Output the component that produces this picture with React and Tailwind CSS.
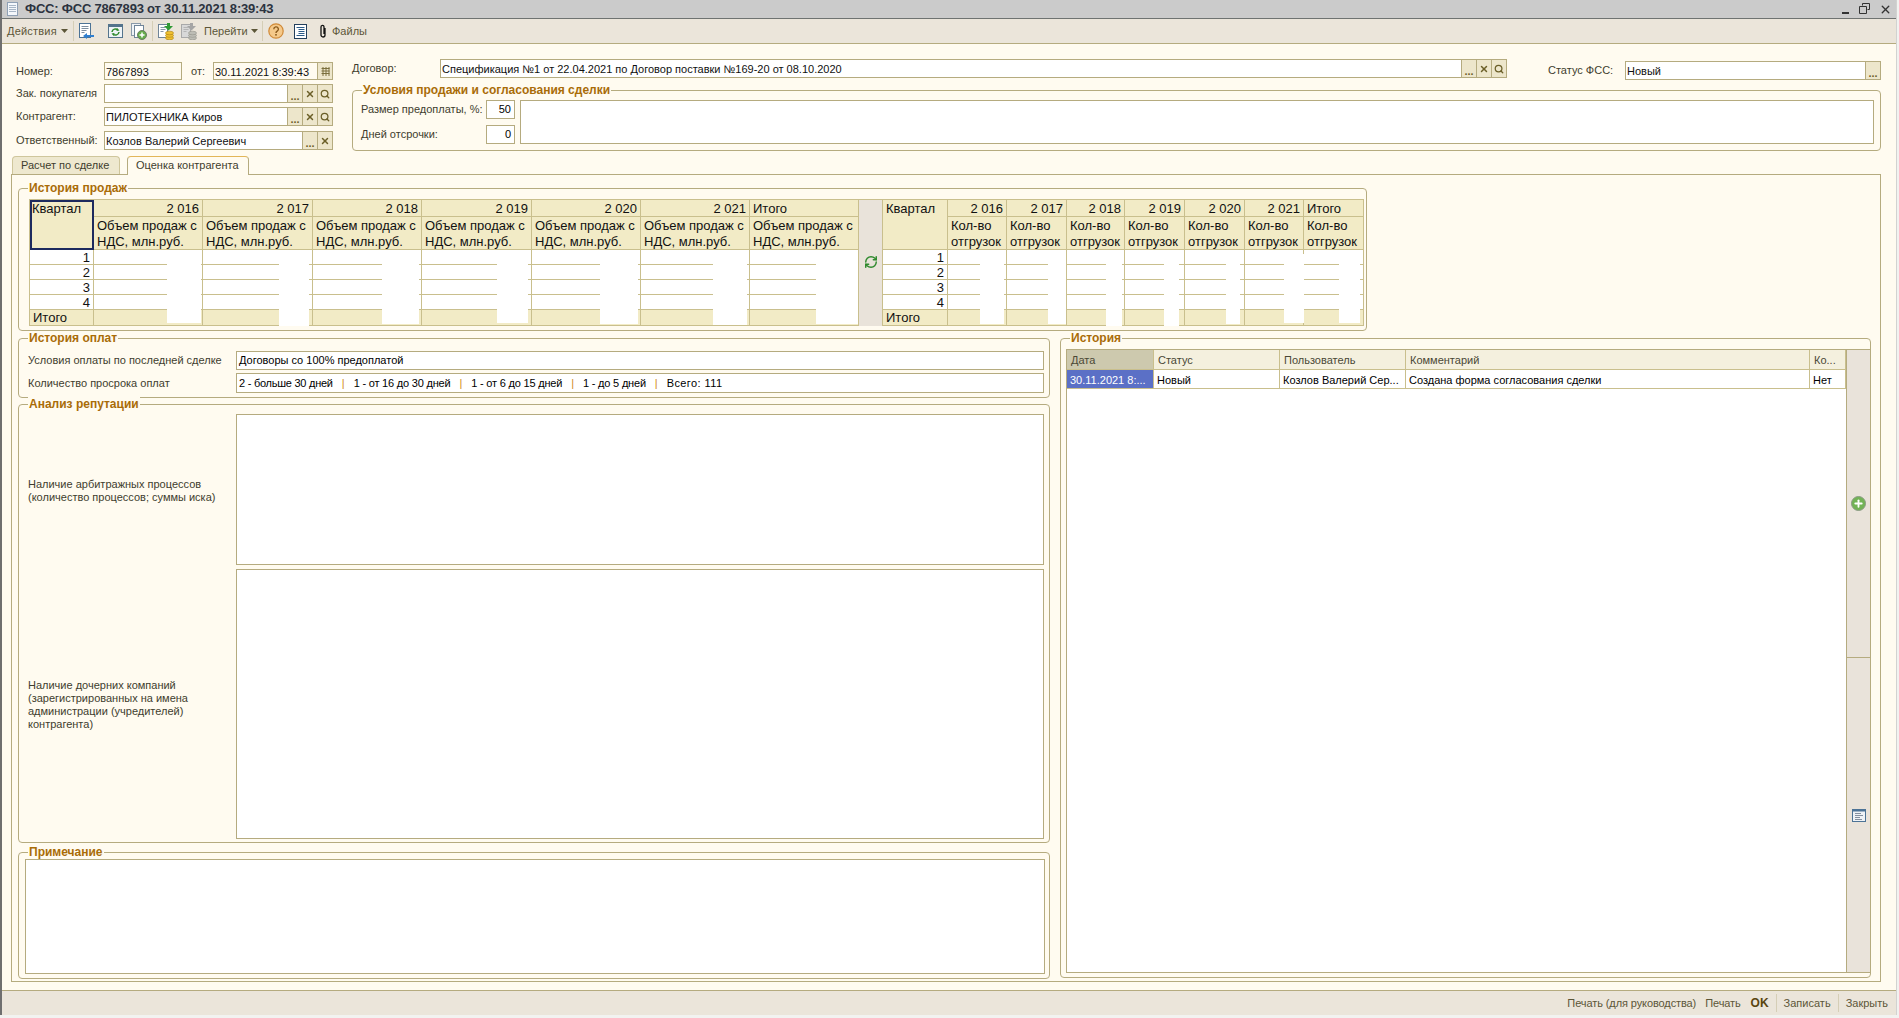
import React from 'react';
import { X, Search, RefreshCw, Plus } from 'lucide-react';

const yearsLeft = ['2 016', '2 017', '2 018', '2 019', '2 020', '2 021'];
const leftWidths = ['w-[109px]', 'w-[110px]', 'w-[109px]', 'w-[110px]', 'w-[109px]', 'w-[109px]', 'w-[109px]'];
const rightWidths = ['w-[59px]', 'w-[60px]', 'w-[58px]', 'w-[60px]', 'w-[60px]', 'w-[59px]', 'w-[60px]'];

const redacted = [
    'left-[137px] top-[54px] w-[34px] h-[69px]',
    'left-[249px] top-[54px] w-[30px] h-[72px]',
    'left-[352px] top-[54px] w-[37px] h-[70px]',
    'left-[467px] top-[54px] w-[31px] h-[69px]',
    'left-[570px] top-[54px] w-[38px] h-[70px]',
    'left-[683px] top-[54px] w-[34px] h-[71px]',
    'left-[786px] top-[54px] w-[42px] h-[70px]',
    'left-[950px] top-[54px] w-[24px] h-[70px]',
    'left-[1018px] top-[54px] w-[18px] h-[70px]',
    'left-[1076px] top-[54px] w-[16px] h-[72px]',
    'left-[1134px] top-[54px] w-[15px] h-[72px]',
    'left-[1196px] top-[54px] w-[14px] h-[70px]',
    'left-[1254px] top-[54px] w-[20px] h-[69px]',
    'left-[1309px] top-[54px] w-[21px] h-[69px]',
];

function Arrow() {
    return (
        <svg width="7" height="4" viewBox="0 0 7 4" className="shrink-0">
            <path d="M0 0h7L3.5 4z" fill="#5c5638" />
        </svg>
    );
}

function Sep() {
    return <div className="w-px h-[20px] bg-[#d5ceb6] shrink-0" />;
}

function DocArrowIcon() {
    return (
        <svg width="17" height="17" viewBox="0 0 17 17" className="shrink-0">
            <rect x="1.5" y="0.5" width="11" height="14" fill="#fff" stroke="#4c7396" />
            <path d="M3.5 3.5h7M3.5 5.5h7M3.5 7.5h5M3.5 9.5h3" stroke="#7d8ea0" />
            <path d="M5 13l4-3v2h7v2H9v2z" fill="#2f7fd0" />
        </svg>
    );
}

function WindowRefreshIcon() {
    return (
        <svg width="15" height="14" viewBox="0 0 15 14" className="shrink-0">
            <rect x="0.5" y="0.5" width="14" height="13" fill="#eef3f6" stroke="#54748c" />
            <rect x="1" y="1" width="13" height="2" fill="#54748c" />
            <path d="M4 8a3.5 3.5 0 0 1 6-2M11 8a3.5 3.5 0 0 1-6 2" fill="none" stroke="#2f8a2d" strokeWidth="1.5" />
            <path d="M9 4l2.5 2.5-3 .5zM6 12L3.5 9.5l3-.5z" fill="#2f8a2d" />
        </svg>
    );
}

function DocPlusIcon() {
    return (
        <svg width="16" height="17" viewBox="0 0 16 17" className="shrink-0">
            <rect x="0.5" y="0.5" width="9" height="12" fill="#f0f3f6" stroke="#8a9aaa" />
            <rect x="3.5" y="2.5" width="9" height="12" fill="#fff" stroke="#6f8498" />
            <circle cx="11" cy="12" r="4.5" fill="#66ad4a" stroke="#6b7d64" />
            <path d="M11 9.5v5M8.5 12h5" stroke="#fff" strokeWidth="1.5" />
        </svg>
    );
}

function DocCoinsIcon({ gray }) {
    const arrow = gray ? '#a5a5a5' : '#2f9a35';
    const coin = gray ? '#bdbdb5' : '#f0c030';
    const edge = gray ? '#98988f' : '#b58a18';
    return (
        <svg width="16" height="17" viewBox="0 0 16 17" className="shrink-0">
            <rect x="0.5" y="1.5" width="9" height="13" fill={gray ? '#d8d8d8' : '#fff'} stroke={gray ? '#a9a9a9' : '#6f8498'} />
            <path d="M2.5 4.5h5M2.5 6.5h5M2.5 8.5h3" stroke={gray ? '#b5b5b5' : '#8898a8'} />
            <path d="M9 0h3v3h3l-4.5 4.5L6 3h3z" fill={arrow} />
            <ellipse cx="11.5" cy="15" rx="4" ry="1.8" fill={coin} stroke={edge} strokeWidth="0.7" />
            <ellipse cx="11.5" cy="12.5" rx="4" ry="1.8" fill={coin} stroke={edge} strokeWidth="0.7" />
            <ellipse cx="11.5" cy="10" rx="4" ry="1.8" fill={coin} stroke={edge} strokeWidth="0.7" />
        </svg>
    );
}

function HelpIcon() {
    return (
        <svg width="16" height="16" viewBox="0 0 16 16" className="shrink-0">
            <circle cx="8" cy="8" r="7.2" fill="#f5c98a" stroke="#d08a38" strokeWidth="1.2" />
            <path d="M5.8 6.2a2.3 2.3 0 1 1 3.4 2c-.8.5-1.2.8-1.2 1.8" fill="none" stroke="#8a5a1c" strokeWidth="1.4" />
            <rect x="7.2" y="11" width="1.6" height="1.6" fill="#8a5a1c" />
        </svg>
    );
}

function ListDocIcon() {
    return (
        <svg width="13" height="15" viewBox="0 0 13 15" className="shrink-0">
            <rect x="0.5" y="0.5" width="12" height="14" fill="#fff" stroke="#24405c" />
            <path d="M2.5 3.5h8M4.5 5.5h6M4.5 7.5h6M4.5 9.5h6M2.5 11.5h8" stroke="#2c5c88" />
        </svg>
    );
}

function ClipIcon() {
    return (
        <svg width="8" height="14" viewBox="0 0 8 14" className="shrink-0">
            <path d="M6 4v7a2 2 0 0 1-4 0V3a1.5 1.5 0 0 1 3-.2V10" fill="none" stroke="#111" strokeWidth="1.3" />
        </svg>
    );
}

function CalendarIcon() {
    return (
        <svg width="9" height="9" viewBox="0 0 9 9">
            <path d="M.5 1.5h8M.5 4h8M.5 6.5h8M2 0v9M5 0v9M8 0v9" stroke="#7a6f3c" />
        </svg>
    );
}

function FieldButton({ children }) {
    return (
        <div className="w-[15px] shrink-0 flex items-center justify-center border-l border-[#b5ab7f] bg-[#ede6cb] text-[#6b5f28]">
            {children}
        </div>
    );
}

const Dots = () => <span className="text-[11px] leading-none font-bold pt-[5px]">...</span>;
const Cross = () => <X size={10} strokeWidth={3.5} />;
const Magnify = () => <Search size={10} strokeWidth={3} />;

function Field({ value, buttons, cream, className }) {
    return (
        <div className={`flex border border-[#b5ab7f] ${cream ? 'bg-[#fffbf0]' : 'bg-white'} ${className}`}>
            <div className="flex-1 min-w-0 px-[1px] text-[11px] leading-[18px] text-[#101010] whitespace-nowrap overflow-hidden">{value}</div>
            {buttons}
        </div>
    );
}

function Group({ title, className, children }) {
    return (
        <div className={`relative border border-[#b5ab7f] rounded-[4px] ${className}`}>
            <div className="absolute -top-[8px] left-[9px] px-[1px] bg-[#fffbf0] text-[12px] leading-[14px] font-bold text-[#a96c08] whitespace-nowrap">{title}</div>
            {children}
        </div>
    );
}

function HeaderRow({ label, children, className }) {
    return (
        <div className={`flex items-stretch ${className}`}>
            <div className="w-[88px] shrink-0 text-[11px] leading-[19px] text-[#3e3d2e] whitespace-nowrap">{label}</div>
            {children}
        </div>
    );
}

function Cell({ className, children }) {
    return <div className={`border-r border-b border-[#c9bf8d] ${className}`}>{children}</div>;
}

const headCell = 'bg-[#f2ebc6] text-[13px] text-[#111] px-[3px]';
const bodyCell = 'bg-white h-[15px] text-[13px] leading-[15px] text-right pr-[3px] text-[#111]';
const footCell = 'bg-[#f2ebc6] h-[16px] text-[13px] leading-[16px] px-[3px] text-[#111]';

function Column({ width, year, sub }) {
    return (
        <div className={`flex flex-col shrink-0 ${width}`}>
            <Cell className={`${headCell} h-[17px] leading-[17px] ${year === 'Итого' ? 'text-left' : 'text-right'}`}>{year}</Cell>
            <Cell className={`${headCell} h-[33px] leading-[16px] pt-[1px] whitespace-pre-line`}>{sub}</Cell>
            <Cell className={bodyCell} />
            <Cell className={bodyCell} />
            <Cell className={bodyCell} />
            <Cell className={bodyCell} />
            <Cell className={footCell} />
        </div>
    );
}

function QuarterColumn({ width, selected }) {
    return (
        <div className={`flex flex-col shrink-0 ${width}`}>
            {selected ? (
                <div className="bg-[#f2ebc6] text-[13px] text-[#111] h-[50px] leading-[14px] border-2 border-[#1d2a5e]">Квартал</div>
            ) : (
                <Cell className={`${headCell} h-[50px] leading-[17px]`}>Квартал</Cell>
            )}
            {[1, 2, 3, 4].map(n => <Cell key={n} className={bodyCell}>{n}</Cell>)}
            <Cell className={footCell}>Итого</Cell>
        </div>
    );
}

function SalesTable() {
    const names = [...yearsLeft, 'Итого'];
    return (
        <div className="relative flex w-[1335px] border-t border-l border-[#c9bf8d]">
            <QuarterColumn width="w-[64px]" selected />
            {names.map((y, i) => (
                <Column key={y} width={leftWidths[i]} year={y} sub={'Объем продаж с\nНДС, млн.руб.'} />
            ))}
            <div className="w-[24px] shrink-0 bg-[#e9e3da] border-r border-[#c9bf8d] flex justify-center pt-[55px]">
                <RefreshCw size={14} strokeWidth={2.5} className="text-[#2f8a2d]" />
            </div>
            <QuarterColumn width="w-[65px]" />
            {names.map((y, i) => (
                <Column key={y} width={rightWidths[i]} year={y} sub={'Кол-во\nотгрузок'} />
            ))}
            {redacted.map(r => <div key={r} className={`absolute bg-white ${r}`} />)}
        </div>
    );
}

const historyCols = [
    { name: 'Дата', value: '30.11.2021 8:...', width: 'w-[87px]', head: 'bg-[#cdc9ae]', cell: 'bg-[#5b70c6] text-white' },
    { name: 'Статус', value: 'Новый', width: 'w-[126px]', head: 'bg-[#f4f0de]', cell: 'bg-white' },
    { name: 'Пользователь', value: 'Козлов Валерий Сер...', width: 'w-[126px]', head: 'bg-[#f4f0de]', cell: 'bg-white' },
    { name: 'Комментарий', value: 'Создана форма согласования сделки', width: 'w-[404px]', head: 'bg-[#f4f0de]', cell: 'bg-white' },
    { name: 'Ко...', value: 'Нет', width: 'w-[36px]', head: 'bg-[#f4f0de]', cell: 'bg-white' },
];

function HistoryTable() {
    return (
        <div className="flex ml-[5px] mt-[10px] h-[624px]">
            <div className="w-[780px] shrink-0 bg-white border border-r-0 border-[#b5ab7f] flex flex-col">
                <div className="flex">
                    {historyCols.map(c => (
                        <Cell key={c.name} className={`${c.width} ${c.head} h-[20px] text-[11px] leading-[20px] px-[4px] text-[#4a4836] whitespace-nowrap`}>{c.name}</Cell>
                    ))}
                </div>
                <div className="flex">
                    {historyCols.map(c => (
                        <Cell key={c.name} className={`${c.width} ${c.cell} h-[19px] text-[11px] leading-[20px] px-[3px] whitespace-nowrap overflow-hidden`}>{c.value}</Cell>
                    ))}
                </div>
            </div>
            <div className="w-[24px] shrink-0 flex flex-col bg-[#e9e3da] border-t border-b border-l border-[#b5ab7f]">
                <div className="h-[308px] shrink-0 flex items-center justify-center border-b border-[#b5ab7f]">
                    <div className="w-[15px] h-[15px] rounded-full bg-[#72b356] border border-[#8b9a84] flex items-center justify-center">
                        <Plus size={11} strokeWidth={4} className="text-white" />
                    </div>
                </div>
                <div className="flex-1 flex items-center justify-center">
                    <svg width="14" height="13" viewBox="0 0 14 13">
                        <rect x="0.5" y="0.5" width="13" height="12" fill="#eef2f6" stroke="#4c7396" />
                        <rect x="1" y="1" width="12" height="1.5" fill="#4c7396" />
                        <path d="M3 4.5h6M3 6.5h8M3 8.5h5M3 10.5h7" stroke="#8490a0" />
                    </svg>
                </div>
            </div>
        </div>
    );
}

function OverdueSep() {
    return <span className="mx-[9px] text-[#d08a20]">|</span>;
}

const box = 'bg-white border border-[#b5ab7f]';

export default function App() {
    return (
        <div className="w-[1899px] h-[1018px] bg-[#f2f2f0] overflow-hidden font-['Liberation_Sans',Arial,sans-serif]">
            <div className="w-[1897px] h-[1015px] flex flex-col bg-[#fffbf0] border-l-2 border-r border-l-[#6f6f6f] border-r-[#d2d2d0]">
                {/* Title */}
                <div className="h-[19px] shrink-0 flex items-center bg-[#cbcbcb] border-b border-[#6f7371] pl-[5px] pr-[4px]">
                    <svg width="11" height="14" viewBox="0 0 11 14" className="shrink-0">
                        <rect x="0.5" y="0.5" width="10" height="13" fill="#f4f7fb" stroke="#8fa0b5" />
                        <path d="M2 3.5h7M2 5.5h7M2 7.5h7M2 9.5h7" stroke="#a8b6c6" />
                    </svg>
                    <div className="ml-[7px] text-[13px] tracking-[-0.2px] font-bold leading-[18px] text-[#2c3340] whitespace-nowrap">ФСС: ФСС 7867893 от 30.11.2021 8:39:43</div>
                    <div className="ml-auto flex items-center">
                        <div className="w-[7px] h-[2px] bg-[#333] mt-[7px]" />
                        <svg width="13" height="12" viewBox="0 0 13 12" className="ml-[9px]">
                            <path d="M4.5 2.5v-2h7v6h-2M1.5 3.5h7v7h-7z" fill="none" stroke="#333" />
                        </svg>
                        <X size={13} strokeWidth={2.5} className="ml-[8px] text-[#333]" />
                    </div>
                </div>

                {/* Toolbar */}
                <div className="h-[25px] shrink-0 flex items-center bg-[#ebe5da] border-b border-[#b5ab7f] pl-[5px] text-[11px] text-[#5c5638]">
                    <span className="w-[50px] tracking-[0.2px] whitespace-nowrap">Действия</span>
                    <span className="ml-[4px]"><Arrow /></span>
                    <span className="ml-[5px]"><Sep /></span>
                    <span className="ml-[4px]"><DocArrowIcon /></span>
                    <span className="ml-[13px]"><WindowRefreshIcon /></span>
                    <span className="ml-[8px]"><DocPlusIcon /></span>
                    <span className="ml-[5px]"><Sep /></span>
                    <span className="ml-[5px]"><DocCoinsIcon /></span>
                    <span className="ml-[7px]"><DocCoinsIcon gray /></span>
                    <span className="ml-[7px] w-[43px] whitespace-nowrap">Перейти</span>
                    <span className="ml-[4px]"><Arrow /></span>
                    <span className="ml-[4px]"><Sep /></span>
                    <span className="ml-[5px]"><HelpIcon /></span>
                    <span className="ml-[10px]"><ListDocIcon /></span>
                    <span className="ml-[12px]"><ClipIcon /></span>
                    <span className="ml-[5px] whitespace-nowrap">Файлы</span>
                </div>

                {/* Header fields */}
                <div className="flex shrink-0 pl-[14px]">
                    <div className="w-[317px] shrink-0 pt-[18px]">
                        <div className="flex h-[18px]">
                            <div className="w-[88px] text-[11px] leading-[19px] text-[#3e3d2e]">Номер:</div>
                            <Field value="7867893" cream className="w-[78px]" />
                            <div className="w-[31px] text-[11px] leading-[19px] text-[#3e3d2e] pl-[9px]">от:</div>
                            <Field value="30.11.2021  8:39:43" cream className="w-[120px] whitespace-pre" buttons={<FieldButton><CalendarIcon /></FieldButton>} />
                        </div>
                        <HeaderRow label="Зак. покупателя" className="h-[19px] mt-[4px]">
                            <Field value="" className="flex-1" buttons={<><FieldButton><Dots /></FieldButton><FieldButton><Cross /></FieldButton><FieldButton><Magnify /></FieldButton></>} />
                        </HeaderRow>
                        <HeaderRow label="Контрагент:" className="h-[19px] mt-[4px]">
                            <Field value="ПИЛОТЕХНИКА Киров" className="flex-1" buttons={<><FieldButton><Dots /></FieldButton><FieldButton><Cross /></FieldButton><FieldButton><Magnify /></FieldButton></>} />
                        </HeaderRow>
                        <HeaderRow label="Ответственный:" className="h-[19px] mt-[5px]">
                            <Field value="Козлов Валерий Сергеевич" className="flex-1" buttons={<><FieldButton><Dots /></FieldButton><FieldButton><Cross /></FieldButton></>} />
                        </HeaderRow>
                    </div>

                    <div className="w-[1529px] shrink-0 ml-[19px] pt-[15px]">
                        <div className="flex items-start h-[21px]">
                            <HeaderRow label="Договор:" className="h-[19px]">
                                <Field value="Спецификация №1 от 22.04.2021 по Договор поставки №169-20 от 08.10.2020" className="w-[1067px]" buttons={<><FieldButton><Dots /></FieldButton><FieldButton><Cross /></FieldButton><FieldButton><Magnify /></FieldButton></>} />
                            </HeaderRow>
                            <div className="w-[77px] ml-[41px] text-[11px] leading-[19px] mt-[2px] text-[#3e3d2e] whitespace-nowrap">Статус ФСС:</div>
                            <Field value="Новый" className="w-[256px] h-[19px] mt-[2px]" buttons={<FieldButton><Dots /></FieldButton>} />
                        </div>
                        <Group title="Условия продажи и согласования сделки" className="mt-[10px] h-[61px] flex pl-[8px] pt-[9px] pr-[6px]">
                            <div className="w-[125px] shrink-0 text-[11px] text-[#3e3d2e]">
                                <div className="h-[19px] leading-[19px] whitespace-nowrap">Размер предоплаты, %:</div>
                                <div className="h-[19px] mt-[6px] leading-[19px]">Дней отсрочки:</div>
                            </div>
                            <div className="w-[29px] shrink-0 text-[11px] text-right">
                                <div className={`${box} h-[19px] leading-[17px] pr-[3px]`}>50</div>
                                <div className={`${box} h-[19px] mt-[6px] leading-[17px] pr-[3px]`}>0</div>
                            </div>
                            <div className={`${box} flex-1 ml-[5px] h-[44px]`} />
                        </Group>
                    </div>
                </div>

                {/* Tabs */}
                <div className="flex items-start shrink-0 mt-[5px] ml-[10px] h-[18px] text-[11px] text-[#3e3d2e]">
                    <div className="w-[108px] h-[18px] leading-[17px] pl-[8px] bg-[#eee8cf] border border-b-0 border-[#cfc69c] rounded-t-[4px]">Расчет по сделке</div>
                    <div className="relative w-[122px] h-[19px] ml-[7px] leading-[17px] pl-[8px] bg-[#fffbf0] border border-b-0 border-[#b5ab7f] border-t-[#e2b65a] rounded-t-[4px]">Оценка контрагента</div>
                </div>

                {/* Tab page */}
                <div className="ml-[9px] w-[1870px] h-[808px] shrink-0 border border-[#b5ab7f] pl-[6px] pt-[13px]">
                    <Group title="История продаж" className="w-[1349px] h-[143px] pl-[10px] pt-[10px]">
                        <SalesTable />
                    </Group>

                    <div className="flex mt-[7px]">
                        <div className="w-[1032px] shrink-0">
                            <Group title="История оплат" className="h-[60px] pl-[9px] pt-[12px]">
                                <div className="flex h-[19px] text-[11px]">
                                    <div className="w-[208px] leading-[18px] text-[#3e3d2e]">Условия оплаты по последней сделке</div>
                                    <div className={`${box} w-[808px] leading-[17px] px-[2px]`}>Договоры со 100% предоплатой</div>
                                </div>
                                <div className="flex h-[20px] mt-[3px] text-[11px]">
                                    <div className="w-[208px] leading-[20px] text-[#3e3d2e]">Количество просрока оплат</div>
                                    <div className={`${box} w-[808px] leading-[18px] px-[2px] whitespace-nowrap`}>
                                        <span className="tracking-[-0.25px]">2 - больше 30 дней</span>
                                        <OverdueSep />
                                        <span className="tracking-[-0.2px]">1 - от 16 до 30 дней</span>
                                        <OverdueSep />
                                        <span className="tracking-[-0.2px]">1 - от 6 до 15 дней</span>
                                        <OverdueSep />
                                        <span className="tracking-[-0.2px]">1 - до 5 дней</span>
                                        <OverdueSep />
                                        <span className="tracking-[0.4px]">Всего: 111</span>
                                    </div>
                                </div>
                            </Group>

                            <Group title="Анализ репутации" className="mt-[6px] h-[439px] pl-[9px] pt-[9px]">
                                <div className="flex items-center h-[151px]">
                                    <div className="w-[208px] pt-[2px] text-[11px] leading-[13px] text-[#3e3d2e]">Наличие арбитражных процессов<br />(количество процессов; суммы иска)</div>
                                    <div className={`${box} w-[808px] h-[151px]`} />
                                </div>
                                <div className="flex items-center h-[270px] mt-[4px]">
                                    <div className="w-[208px] pt-[2px] text-[11px] leading-[13px] text-[#3e3d2e]">Наличие дочерних компаний<br />(зарегистрированных на имена<br />администрации (учредителей)<br />контрагента)</div>
                                    <div className={`${box} w-[808px] h-[270px]`} />
                                </div>
                            </Group>

                            <Group title="Примечание" className="mt-[9px] h-[127px] pl-[6px] pt-[6px]">
                                <div className={`${box} w-[1020px] h-[115px]`} />
                            </Group>
                        </div>

                        <Group title="История" className="w-[811px] h-[640px] ml-[10px]">
                            <HistoryTable />
                        </Group>
                    </div>
                </div>

                {/* Status bar */}
                <div className="mt-auto h-[25px] shrink-0 flex items-center justify-end bg-[#ebe5da] border-t border-[#b5ab7f] pr-[8px] text-[11px] text-[#5c5638]">
                    <span className="tracking-[-0.1px] whitespace-nowrap">Печать (для руководства)</span>
                    <span className="ml-[9px] tracking-[-0.1px] whitespace-nowrap">Печать</span>
                    <span className="ml-[10px] font-bold text-[12px] text-[#5a4510]">OK</span>
                    <div className="w-px h-[18px] bg-[#d5ceb6] ml-[7px]" />
                    <span className="ml-[7px] whitespace-nowrap">Записать</span>
                    <div className="w-px h-[18px] bg-[#d5ceb6] ml-[7px]" />
                    <span className="ml-[7px] whitespace-nowrap">Закрыть</span>
                </div>
            </div>
        </div>
    );
}
